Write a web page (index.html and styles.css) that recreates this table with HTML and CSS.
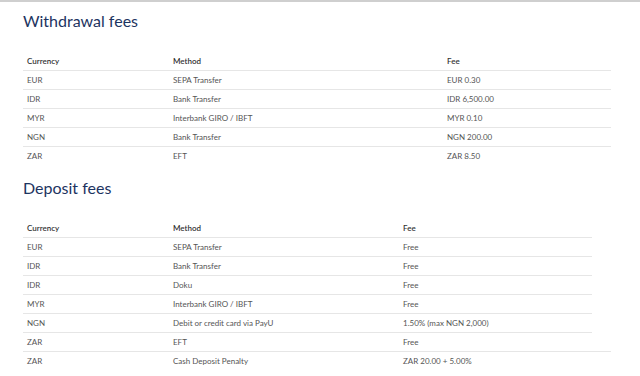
FILE: index.html
```html
<!DOCTYPE html>
<html lang="en">
<head>
    <meta charset="UTF-8">
    <meta name="viewport" content="width=device-width, initial-scale=1.0">
    <title>Fees</title>
    <link rel="stylesheet" href="styles.css">
</head>
<body>
    <div class="page">
        <!-- withdrawal -->
        <h2 class="title">Withdrawal fees</h2>
        <table class="fees fees-withdrawal">
            <colgroup>
                <col class="c-cur">
                <col class="c-method">
                <col class="c-fee">
            </colgroup>
            <thead>
                <tr><th>Currency</th><th>Method</th><th>Fee</th></tr>
            </thead>
            <tbody>
                <tr><td>EUR</td><td>SEPA Transfer</td><td>EUR 0.30</td></tr>
                <tr><td>IDR</td><td>Bank Transfer</td><td>IDR 6,500.00</td></tr>
                <tr><td>MYR</td><td>Interbank GIRO / IBFT</td><td>MYR 0.10</td></tr>
                <tr><td>NGN</td><td>Bank Transfer</td><td>NGN 200.00</td></tr>
                <tr><td>ZAR</td><td>EFT</td><td>ZAR 8.50</td></tr>
            </tbody>
        </table>

        <!-- deposit -->
        <h2 class="title">Deposit fees</h2>
        <table class="fees fees-deposit">
            <colgroup>
                <col class="c-cur">
                <col class="c-method">
                <col class="c-fee">
                <col class="c-pad">
            </colgroup>
            <thead>
                <tr><th>Currency</th><th>Method</th><th>Fee</th><th class="pad"></th></tr>
            </thead>
            <tbody>
                <tr><td>EUR</td><td>SEPA Transfer</td><td>Free</td><td class="pad"></td></tr>
                <tr><td>IDR</td><td>Bank Transfer</td><td>Free</td><td class="pad"></td></tr>
                <tr><td>IDR</td><td>Doku</td><td>Free</td><td class="pad"></td></tr>
                <tr><td>MYR</td><td>Interbank GIRO / IBFT</td><td>Free</td><td class="pad"></td></tr>
                <tr><td>NGN</td><td>Debit or credit card via PayU</td><td>1.50% (max NGN 2,000)</td><td class="pad"></td></tr>
                <tr class="wide"><td>ZAR</td><td>EFT</td><td>Free</td><td class="pad"></td></tr>
                <tr><td>ZAR</td><td>Cash Deposit Penalty</td><td>ZAR 20.00 + 5.00%</td><td class="pad"></td></tr>
            </tbody>
        </table>
    </div>
</body>
</html>
```

FILE: styles.css
```css
body {
    margin: 0;
    font-family: Lato, "Open Sans", sans-serif;
    color: #555;
    background: #fff;
    border-top: 2px solid #cfcfcf;
}

.page {
    padding: 9px 0 0 23px;
}

.title {
    margin: 0 0 21px;
    font-size: 16px;
    font-weight: 400;
    line-height: 20px;
    color: #1d3461; /* dark navy */
}

.fees {
    width: 588px;
    border-collapse: collapse;
    table-layout: fixed;
    font-size: 8px;
    margin-bottom: 13px;
}

.fees th,
.fees td {
    height: 18px;
    padding: 0 4px;
    text-align: left;
    line-height: 18px;
    border-bottom: 1px solid #e6e6e6;
    white-space: nowrap;
}

.fees th {
    font-weight: 600;
    color: #333;
}

.fees tbody tr:last-child td {
    border-bottom: none;
}

.c-cur { width: 146px; }

.fees-withdrawal .c-method { width: 274px; }
.fees-withdrawal .c-fee { width: 168px; }

.fees-deposit .c-method { width: 230px; }
.fees-deposit .c-fee { width: 193px; }
.fees-deposit .c-pad { width: 19px; }

.fees .pad {
    padding: 0;
    border-bottom: none;
}

.fees .wide .pad {
    border-bottom: 1px solid #e6e6e6;
}
```
